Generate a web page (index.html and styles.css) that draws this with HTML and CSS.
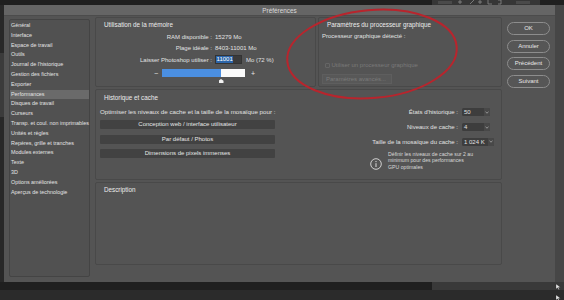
FILE: index.html
```html
<!DOCTYPE html>
<html lang="fr">
<head>
  <meta charset="UTF-8" />
  <title>Préférences</title>
  <link rel="stylesheet" href="styles.css">
</head>
<body>
  <div class="desk-top">
    <div class="ps-toolbar">
      <svg width="100" height="5" viewBox="0 0 100 5">
        <rect x="2" y="1" width="14" height="3" fill="#4a4a4a" />
        <path d="M24 0v4M22 2h4M34 4l4-4M44 0v4M42 2h4M52 0v4h4M62 0h3v4h-3" stroke="#8a8a8a" stroke-width="0.8" fill="none" />
        <rect x="80" y="1" width="14" height="3" fill="#4a4a4a" />
      </svg>
    </div>
  </div>

  <div class="desk-middle">
    <div class="desk-left"><div class="ps-panel"></div></div>

    <div class="window">
      <div class="titlebar">Préférences</div>

      <div class="win-body">
        <ul class="sidebar">
          <li>Général</li>
          <li>Interface</li>
          <li>Espace de travail</li>
          <li>Outils</li>
          <li>Journal de l'historique</li>
          <li>Gestion des fichiers</li>
          <li>Exporter</li>
          <li class="active">Performances</li>
          <li>Disques de travail</li>
          <li>Curseurs</li>
          <li>Transp. et coul. non imprimables</li>
          <li>Unités et règles</li>
          <li>Repères, grille et tranches</li>
          <li>Modules externes</li>
          <li>Texte</li>
          <li>3D</li>
          <li>Options améliorées</li>
          <li>Aperçus de technologie</li>
        </ul>

        <div class="content">
          <div class="row-top">
            <section class="group mem">
              <div class="group-title">Utilisation de la mémoire</div>
              <div class="mem-grid">
                <span class="label">RAM disponible :</span>
                <span>15279 Mo</span>
                <span class="label">Plage idéale :</span>
                <span>8403-11001 Mo</span>
                <span class="label">Laisser Photoshop utiliser :</span>
                <span class="use-value">
                  <span class="value-input"><span class="sel">11001</span></span>
                  <span class="unit">Mo (72 %)</span>
                </span>
              </div>
              <div class="slider">
                <span class="step">−</span>
                <span class="track">
                  <span class="fill" style="width: 71%"></span>
                  <span class="thumb"></span>
                </span>
                <span class="step plus">+</span>
              </div>
            </section>

            <section class="group gpu">
              <div class="group-title">Paramètres du processeur graphique</div>
              <div class="gpu-detect">Processeur graphique détecté :</div>
              <div class="gpu-panel">
                <div class="check-row"><span class="checkbox"></span>Utiliser un processeur graphique</div>
                <div class="adv-btn">Paramètres avancés...</div>
              </div>
            </section>
          </div>

          <section class="group history">
            <div class="group-title">Historique et cache</div>
            <div class="hist-grid">
              <div class="hist-left">
                <div class="hint">Optimiser les niveaux de cache et la taille de la mosaïque pour :</div>
                <div class="flat-btn">Conception web / interface utilisateur</div>
                <div class="flat-btn">Par défaut / Photos</div>
                <div class="flat-btn">Dimensions de pixels immenses</div>
              </div>
              <div class="hist-right">
                <div class="field-grid">
                  <span class="label">États d'historique :</span>
                  <span class="select"><span>50</span><span class="chev"><svg width="4" height="3" viewBox="0 0 4 3"><path d="M0.5 0.8l1.5 1.4 1.5-1.4" stroke="#cfcfcf" stroke-width="0.6" fill="none" /></svg></span></span>
                  <span class="label">Niveaux de cache :</span>
                  <span class="select"><span>4</span><span class="chev"><svg width="4" height="3" viewBox="0 0 4 3"><path d="M0.5 0.8l1.5 1.4 1.5-1.4" stroke="#cfcfcf" stroke-width="0.6" fill="none" /></svg></span></span>
                  <span class="label">Taille de la mosaïque du cache :</span>
                  <span class="select wide"><span>1 024 K</span><span class="chev"><svg width="4" height="3" viewBox="0 0 4 3"><path d="M0.5 0.8l1.5 1.4 1.5-1.4" stroke="#cfcfcf" stroke-width="0.6" fill="none" /></svg></span></span>
                </div>
                <div class="info">
                  <svg class="info-icon" width="12" height="12" viewBox="0 0 12 12">
                    <circle cx="6" cy="6" r="5.3" stroke="#dcdcdc" stroke-width="0.9" fill="none" />
                    <circle cx="6" cy="3.6" r="0.7" fill="#dcdcdc" />
                    <path d="M6 5.2v3.8" stroke="#dcdcdc" stroke-width="1" />
                  </svg>
                  <p>Définir les niveaux de cache sur 2 au minimum pour des performances GPU optimales</p>
                </div>
              </div>
            </div>
          </section>

          <section class="group desc">
            <div class="group-title">Description</div>
          </section>
        </div>

        <div class="actions">
          <div class="btn">OK</div>
          <div class="btn">Annuler</div>
          <div class="btn">Précédent</div>
          <div class="btn">Suivant</div>
        </div>
      </div>
    </div>

    <div class="desk-right"></div>
  </div>

  <div class="desk-bottom">
    <div class="bottom-bar">
      <div class="bb-left"></div>
      <div class="bb-right"></div>
    </div>
    <div class="bottom-rest"></div>
  </div>

  <!-- annotation drawn over the screenshot -->
  <svg class="annotation" width="564" height="300" viewBox="0 0 564 300">
    <ellipse cx="372" cy="54" rx="85" ry="44" transform="rotate(-5 372 54)" fill="none" stroke="#b8252d" stroke-width="2" />
    <path d="M556 284l0 5l1.5-1.2l1.2 2l0.8-0.4l-1.1-2l2-0.2z" fill="#e8e8e8" stroke="#222" stroke-width="0.3" />
    <path d="M556 295l0 5l1.5-1.2l1.2 2l0.8-0.4l-1.1-2l2-0.2z" fill="#e8e8e8" stroke="#222" stroke-width="0.3" />
  </svg>
</body>
</html>
```

FILE: styles.css
```css
* {
  box-sizing: border-box;
  margin: 0;
  padding: 0;
}

html, body {
  width: 564px;
  height: 300px;
  overflow: hidden;
}

body {
  position: relative;
  display: flex;
  flex-direction: column;
  background: #242424;
  font-family: "Liberation Sans", Arial, sans-serif;
  font-size: 6px;
  color: #e2e2e2;
}

/* desktop around the dialog */
.desk-top {
  height: 5px;
  display: flex;
  justify-content: flex-end;
  padding-right: 24px;
  background: #1f1f1f;
}

.ps-toolbar {
  width: 108px;
  height: 5px;
  background: #363636;
  padding-left: 4px;
  line-height: 0;
}

.desk-middle {
  display: flex;
  height: 277px;
}

.desk-left {
  width: 4px;
  background: #282828;
}

.ps-panel {
  margin-top: 48px;
  height: 64px;
  background: #3b3b3b;
}

.desk-right {
  flex: 1;
  background: #464646;
}

.desk-bottom {
  flex: 1;
  display: flex;
  flex-direction: column;
}

.bottom-bar {
  height: 8px;
  display: flex;
}

.bb-left {
  width: 432px;
  background: #1f1f1f;
}

.bb-right {
  flex: 1;
  background: #393939;
}

.bottom-rest {
  flex: 1;
  background: #2b2b2b;
}

/* dialog */
.window {
  width: 551px;
  display: flex;
  flex-direction: column;
  background: #545454;
}

.titlebar {
  height: 11px;
  line-height: 11px;
  text-align: center;
  font-size: 6.4px;
  color: #dadada;
  background: #656565;
  border-bottom: 1px solid #4c4c4c;
}

.win-body {
  flex: 1;
  display: flex;
  padding-left: 5px;
}

.sidebar {
  width: 81px;
  height: 258px;
  margin-top: 3px;
  list-style: none;
  background: #515151;
  border: 1px solid #444;
  border-radius: 2px;
  padding-top: 1px;
  font-size: 5.4px;
}

.sidebar li {
  height: 9.8px;
  line-height: 9.8px;
  padding-left: 1px;
  white-space: nowrap;
  color: #e4e4e4;
}

.sidebar li.active {
  background: #6a6a6a;
}

.content {
  width: 407px;
  margin-left: 5px;
  margin-top: 1px;
  display: flex;
  flex-direction: column;
  gap: 2px;
}

.group {
  border: 1px solid #494949;
  border-radius: 2px;
}

.group-title {
  font-size: 6.3px;
  line-height: 9px;
  padding: 1.5px 0 0 8px;
  color: #ececec;
  white-space: nowrap;
}

.row-top {
  display: grid;
  grid-template-columns: 221px 1fr;
  column-gap: 2px;
  height: 70px;
}

/* memory */
.mem-grid {
  display: grid;
  grid-template-columns: 116px auto;
  grid-template-rows: 11px 11px 13px;
  column-gap: 3px;
  align-items: center;
  margin-top: 2.5px;
  white-space: nowrap;
}

.label {
  text-align: right;
  white-space: nowrap;
}

.use-value {
  display: flex;
  align-items: center;
}

.value-input {
  width: 27px;
  height: 9px;
  display: flex;
  align-items: center;
  background: #3b3b3b;
  border: 1px solid #333;
}

.value-input .sel {
  background: #2d65a8;
  color: #fff;
  line-height: 7px;
  padding: 0 0.5px;
}

.unit {
  margin-left: 4px;
}

.slider {
  display: flex;
  align-items: center;
  padding-left: 58px;
  margin-top: 3px;
  height: 8px;
}

.step {
  width: 8px;
  font-size: 7px;
  color: #e6e6e6;
}

.step.plus {
  margin-left: 6px;
}

.track {
  position: relative;
  width: 83px;
  height: 8px;
  background: #fafafa;
}

.fill {
  display: block;
  height: 100%;
  background: #4b8fe1;
}

.thumb {
  position: absolute;
  left: 56.5px;
  top: 10px;
  width: 5px;
  height: 4px;
  background: #f2f2f2;
  clip-path: polygon(50% 0, 100% 45%, 100% 100%, 0 100%, 0 45%);
}

/* gpu */
.gpu-detect {
  padding-left: 3px;
  line-height: 9px;
  margin-top: 3.5px;
  white-space: nowrap;
}

.gpu-panel {
  padding-left: 3px;
}

.check-row {
  display: flex;
  align-items: center;
  padding-left: 3px;
  margin-top: 20px;
  line-height: 9px;
  color: #7a7a7a;
  white-space: nowrap;
}

.checkbox {
  width: 5px;
  height: 5px;
  border: 1px solid #656565;
  border-radius: 1px;
  margin-right: 1.5px;
}

.adv-btn {
  width: 70px;
  height: 10px;
  line-height: 8px;
  margin-top: 4px;
  padding-left: 3px;
  background: #585858;
  border: 1px solid #5e5e5e;
  color: #7b7b7b;
  white-space: nowrap;
}

/* history */
.history {
  height: 91px;
}

.history .group-title {
  padding-top: 3px;
}

.hist-grid {
  display: grid;
  grid-template-columns: 175px 1fr;
  column-gap: 6px;
  padding: 0 3px 0 4px;
  margin-top: 3px;
}

.hint {
  line-height: 10px;
  margin-top: 2px;
  font-size: 6.2px;
  white-space: nowrap;
}

.flat-btn {
  height: 9px;
  line-height: 9px;
  margin-top: 5.5px;
  text-align: center;
  background: #424242;
  border-radius: 1px;
  color: #e6e6e6;
  white-space: nowrap;
}

.hint + .flat-btn {
  margin-top: 3px;
}

.field-grid {
  display: grid;
  grid-template-columns: 1fr 36px;
  grid-auto-rows: 14.75px;
  column-gap: 4px;
  align-items: center;
}

.select {
  width: 28px;
  height: 8px;
  display: flex;
  justify-content: space-between;
  align-items: center;
  padding-left: 2px;
  background: #3d3d3d;
  border-radius: 1.5px;
  overflow: hidden;
  white-space: nowrap;
}

.select.wide {
  width: 32px;
}

.chev {
  width: 6px;
  height: 8px;
  display: flex;
  align-items: center;
  justify-content: center;
  background: #484848;
  line-height: 0;
}

.info {
  display: flex;
  align-items: flex-start;
  padding-left: 89px;
  margin-top: 1.5px;
}

.info-icon {
  margin-top: 7px;
  flex-shrink: 0;
}

.info p {
  width: 86px;
  margin-left: 6px;
  font-size: 5.2px;
  line-height: 6.5px;
  color: #d8d8d8;
}

/* description */
.desc {
  height: 83px;
}

/* buttons column */
.actions {
  width: 53px;
  padding: 6px 5px 0 5px;
  display: flex;
  flex-direction: column;
  gap: 4.5px;
}

.btn {
  height: 13px;
  line-height: 11px;
  text-align: center;
  border: 1px solid #8d8d8d;
  border-radius: 7px;
  background: #565656;
  color: #e8e8e8;
  font-size: 6px;
}

.annotation {
  position: absolute;
  top: 0;
  left: 0;
  pointer-events: none;
}
```
